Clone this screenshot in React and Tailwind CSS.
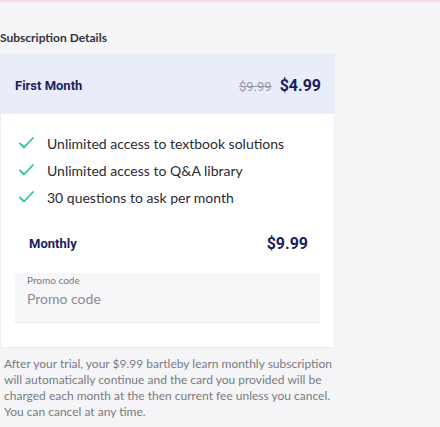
import React from "react";

function Check() {
  return (
    <svg width="15" height="12" viewBox="0 0 15 12" fill="none" className="shrink-0">
      <path d="M1 6.5 L5 10.5 L14 1" stroke="#2ec4a0" strokeWidth="1.8" strokeLinecap="round" strokeLinejoin="round" />
    </svg>
  );
}

export default function App() {
  const body = { fontFamily: "Lato, 'Noto Sans', sans-serif" };
  const head = { fontFamily: "Roboto, 'Noto Sans', sans-serif" };
  return (
    <div className="w-[440px] h-[427px] bg-[#f5f5f8] border-t-2 border-[#f6d9ef] overflow-hidden" style={body}>
      <div className="w-[335px] pt-[28px]">
        <div className="text-[12px] font-bold text-[#333340] leading-4 h-4">Subscription Details</div>
        <div className="mt-[7px] bg-white border border-[#ececf2] rounded-[2px]">
          <div className="h-[60px] bg-[#e9edfa] flex items-center justify-between pl-[14px] pr-[13px] pt-[3px]">
            <span className="text-[13px] font-bold text-[#1b1f5e]" style={head}>First Month</span>
            <div className="flex items-baseline gap-[8px]">
              <span className="text-[13px] text-[#9a9aa4] line-through" style={head}>$9.99</span>
              <span className="text-[16px] font-bold text-[#1b1f5e]" style={head}>$4.99</span>
            </div>
          </div>
          <div className="pt-[20px] pl-[18px] flex flex-col gap-[9px]">
            {["Unlimited access to textbook solutions", "Unlimited access to Q&A library", "30 questions to ask per month"].map((t) => (
              <div key={t} className="flex items-center gap-[13px] h-[18px]">
                <Check />
                <span className="text-[14px] text-[#2a2a35]">{t}</span>
              </div>
            ))}
          </div>
          <div className="mt-[28px] flex items-center justify-between pl-[28px] pr-[26px] h-[20px]">
            <span className="text-[13px] font-bold text-[#1b1f5e]" style={head}>Monthly</span>
            <span className="text-[16px] font-bold text-[#1b1f5e]" style={head}>$9.99</span>
          </div>
          <div className="mt-[19px] mx-[14px] h-[50px] bg-[#f7f7fa] border-b border-[#ececf2] pl-[12px] pt-[1px]">
            <div className="text-[10px] text-[#777783] leading-[13px]">Promo code</div>
            <div className="text-[14px] text-[#8a8a95] leading-[20px] mt-[2px]">Promo code</div>
          </div>
          <div className="h-[24px]"></div>
        </div>
        <p className="mt-[8px] pl-[4px] text-[12px] leading-[16px] text-[#7a7a82]">
          After your trial, your $9.99 bartleby learn monthly subscription will automatically continue and the card you provided will be charged each month at the then current fee unless you cancel. You can cancel at any time.
        </p>
      </div>
    </div>
  );
}
